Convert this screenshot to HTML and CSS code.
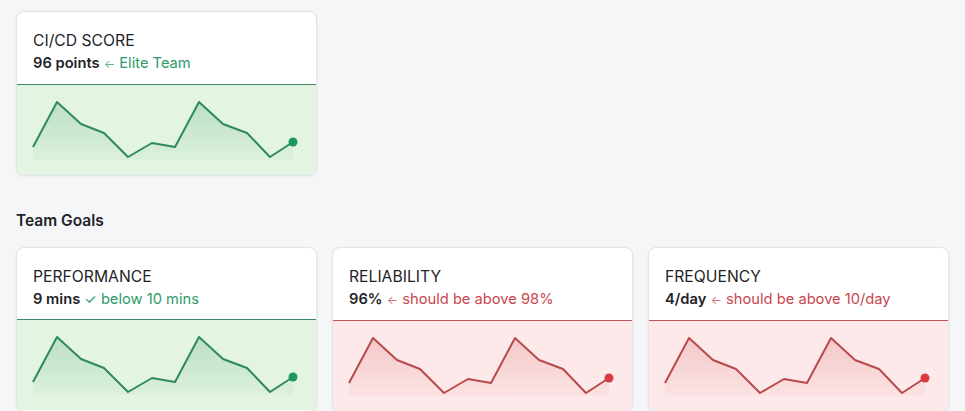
FILE: index.html
```html
<!DOCTYPE html>
<html lang="en">
<head>
    <meta charset="UTF-8">
    <meta name="viewport" content="width=device-width, initial-scale=1.0">
    <title>Delivery Metrics</title>
    <link rel="stylesheet" href="styles.css">
</head>
<body>
    <div class="grid">
        <div class="card good">
            <div class="card-head">
                <div class="card-title">CI/CD SCORE</div>
                <div class="card-value"><b>96 points</b> <span class="arrow">&larr;</span> Elite Team</div>
            </div>
            <div class="chart">
                <svg viewBox="0 0 299 90" preserveAspectRatio="none">
                    <defs>
                        <linearGradient id="fillGood" x1="0" y1="0" x2="0" y2="1">
                            <stop offset="0" stop-color="#2f8f5b" stop-opacity="0.22"/>
                            <stop offset="1" stop-color="#2f8f5b" stop-opacity="0.04"/>
                        </linearGradient>
                    </defs>
                    <polygon class="area" fill="url(#fillGood)" points="16,62 40,17 64,39 87,48 111,72 135,58 158,62 182,17 206,39 230,48 253,72 276,57 276,75 16,75"/>
                    <polyline class="line" points="16,62 40,17 64,39 87,48 111,72 135,58 158,62 182,17 206,39 230,48 253,72 276,57"/>
                    <circle class="dot" cx="276" cy="57" r="4.5"/>
                </svg>
            </div>
        </div>
    </div>

    <h2 class="section-title">Team Goals</h2>

    <div class="grid">
        <div class="card good">
            <div class="card-head">
                <div class="card-title">PERFORMANCE</div>
                <div class="card-value"><b>9 mins</b> <span class="check">&#10003;</span> below 10 mins</div>
            </div>
            <div class="chart">
                <svg viewBox="0 0 299 90" preserveAspectRatio="none">
                    <defs>
                        <linearGradient id="fillGood2" x1="0" y1="0" x2="0" y2="1">
                            <stop offset="0" stop-color="#2f8f5b" stop-opacity="0.22"/>
                            <stop offset="1" stop-color="#2f8f5b" stop-opacity="0.04"/>
                        </linearGradient>
                    </defs>
                    <polygon class="area" fill="url(#fillGood2)" points="16,62 40,17 64,39 87,48 111,72 135,58 158,62 182,17 206,39 230,48 253,72 276,57 276,75 16,75"/>
                    <polyline class="line" points="16,62 40,17 64,39 87,48 111,72 135,58 158,62 182,17 206,39 230,48 253,72 276,57"/>
                    <circle class="dot" cx="276" cy="57" r="4.5"/>
                </svg>
            </div>
        </div>

        <div class="card bad">
            <div class="card-head">
                <div class="card-title">RELIABILITY</div>
                <div class="card-value"><b>96%</b> <span class="arrow">&larr;</span> should be above 98%</div>
            </div>
            <div class="chart">
                <svg viewBox="0 0 299 90" preserveAspectRatio="none">
                    <defs>
                        <linearGradient id="fillBad" x1="0" y1="0" x2="0" y2="1">
                            <stop offset="0" stop-color="#d0454b" stop-opacity="0.2"/>
                            <stop offset="1" stop-color="#d0454b" stop-opacity="0.04"/>
                        </linearGradient>
                    </defs>
                    <polygon class="area" fill="url(#fillBad)" points="16,62 40,17 64,39 87,48 111,72 135,58 158,62 182,17 206,39 230,48 253,72 276,57 276,75 16,75"/>
                    <polyline class="line" points="16,62 40,17 64,39 87,48 111,72 135,58 158,62 182,17 206,39 230,48 253,72 276,57"/>
                    <circle class="dot" cx="276" cy="57" r="4.5"/>
                </svg>
            </div>
        </div>

        <div class="card bad">
            <div class="card-head">
                <div class="card-title">FREQUENCY</div>
                <div class="card-value"><b>4/day</b> <span class="arrow">&larr;</span> should be above 10/day</div>
            </div>
            <div class="chart">
                <svg viewBox="0 0 299 90" preserveAspectRatio="none">
                    <defs>
                        <linearGradient id="fillBad2" x1="0" y1="0" x2="0" y2="1">
                            <stop offset="0" stop-color="#d0454b" stop-opacity="0.2"/>
                            <stop offset="1" stop-color="#d0454b" stop-opacity="0.04"/>
                        </linearGradient>
                    </defs>
                    <polygon class="area" fill="url(#fillBad2)" points="16,62 40,17 64,39 87,48 111,72 135,58 158,62 182,17 206,39 230,48 253,72 276,57 276,75 16,75"/>
                    <polyline class="line" points="16,62 40,17 64,39 87,48 111,72 135,58 158,62 182,17 206,39 230,48 253,72 276,57"/>
                    <circle class="dot" cx="276" cy="57" r="4.5"/>
                </svg>
            </div>
        </div>
    </div>
</body>
</html>
```

FILE: styles.css
```css
body {
    font-family: 'Inter', 'Noto Sans', sans-serif;
    margin: 0;
    padding: 11px 16px 0;
    background: #f5f6f8;
    color: #1f2328;
    overflow: hidden;
}

.grid {
    display: grid;
    grid-template-columns: repeat(3, 1fr);
    gap: 15px;
}

.card {
    background: #ffffff;
    border: 1px solid #e2e4e8;
    border-radius: 8px;
    box-shadow: 0 1px 3px rgba(0, 0, 0, 0.06);
    overflow: hidden;
}

.card-head {
    padding: 19px 16px 10px;
}

.card-title {
    font-size: 15.7px;
    line-height: 20px;
    margin-bottom: 2px;
}

.card-value {
    font-size: 14.7px;
    line-height: 20px;
}

.card-value b {
    font-weight: 600;
    color: #1f2328;
}

.arrow {
    font-size: 12px;
    opacity: 0.75;
}

.check {
    font-size: 14px;
}

.chart {
    height: 90px;
}

.chart svg {
    display: block;
    width: 100%;
    height: 100%;
}

.line {
    fill: none;
    stroke-width: 2;
    stroke-linejoin: round;
}

/* green state */
.good .card-value { color: #2f9a6b; }
.good .card-head { border-bottom: 1px solid #3b8a62; }
.good .chart { background: #e3f5e2; }
.good .line { stroke: #2e8a57; }
.good .dot { fill: #1c9a5c; }

/* red state */
.bad .card-value { color: #c8464e; }
.bad .card-head { border-bottom: 1px solid #bf5356; }
.bad .chart { background: #fde9e9; }
.bad .line { stroke: #b84a4c; }
.bad .dot { fill: #da3a40; }

.section-title {
    font-size: 15.5px;
    font-weight: 600;
    line-height: 20px;
    margin: 35px 0 16px;
}
```
